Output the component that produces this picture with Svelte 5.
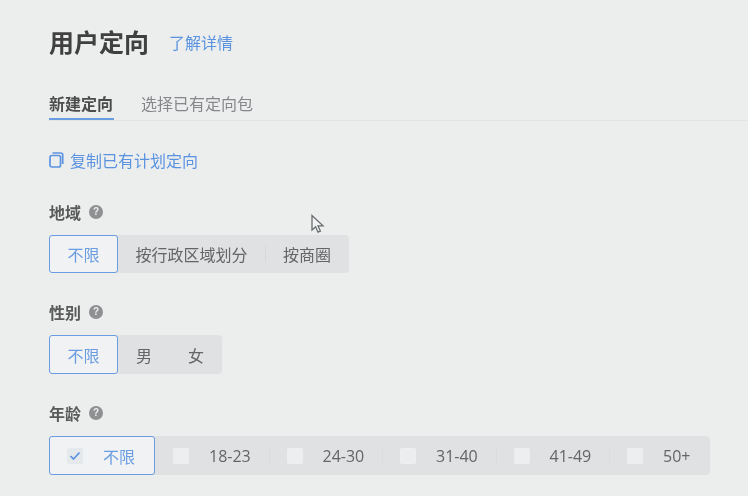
<script>
  const ages = ['18-23', '24-30', '31-40', '41-49', '50+'];
</script>

<main class="page">
  <header class="head">
    <h1>用户定向</h1>
    <a class="more">了解详情</a>
  </header>

  <nav class="tabs">
    <span class="tab active">新建定向</span>
    <span class="tab">选择已有定向包</span>
  </nav>

  <a class="copy">
    <svg width="15" height="16" viewBox="0 0 15 16" fill="none" stroke="#5b93e0" stroke-width="1.7">
      <rect x="1" y="3.5" width="10.5" height="11.5" rx="1.8" />
      <path d="M3.5 1h8.2a2 2 0 0 1 2 2v9" />
    </svg>
    复制已有计划定向
  </a>

  <section class="field first">
    <div class="label">地域 <i class="help">?</i></div>
    <div class="seg">
      <span class="opt on w69">不限</span>
      <span class="opt w147">按行政区域划分</span>
      <span class="opt w84 sep">按商圈</span>
    </div>
  </section>

  <section class="field second">
    <div class="label">性别 <i class="help">?</i></div>
    <div class="seg tall">
      <span class="opt on w69">不限</span>
      <span class="opt w52">男</span>
      <span class="opt w52">女</span>
    </div>
  </section>

  <section class="field third">
    <div class="label">年龄 <i class="help">?</i></div>
    <div class="seg tall">
      <span class="opt on age first-age">
        <b class="box checked">
          <svg width="12" height="10" viewBox="0 0 12 10" fill="none" stroke="#5b93e0" stroke-width="1.7"><path d="M1.5 5l3 3 6-6.5" /></svg>
        </b>
        不限
      </span>
      {#each ages as a, i}
        <span class="opt age" class:sep={i > 0} class:faint={i > 0} class:last={i === 4}><b class="box"></b><span class="num">{a}</span></span>
      {/each}
    </div>
  </section>

  <svg class="cursor" width="16" height="21" viewBox="0 0 16 21" fill="#f1f2f2" stroke="#6a6d70" stroke-width="1.3">
    <path d="M2 1.5v14.5l3.6-3.2 2.4 5.4 2.4-1.1-2.4-5.3h5z" />
  </svg>
</main>

<style>
  :global(body) {
    margin: 0;
    background: #eceeee;
  }
  .page {
    position: relative;
    width: 748px;
    height: 496px;
    box-sizing: border-box;
    padding: 25px 0 0 49px;
    overflow: hidden;
    background: #eceeee;
    color: #555;
    font-family: "Noto Sans CJK SC", "Liberation Sans", sans-serif;
    filter: blur(0.6px);
  }
  .head {
    display: flex;
    align-items: center;
    height: 33px;
  }
  h1 {
    margin: 0;
    font-size: 25px;
    line-height: 33px;
    font-weight: 700;
    color: #404040;
  }
  .more {
    margin-left: 20px;
    font-size: 16px;
    color: #5b93e0;
  }
  .tabs {
    display: flex;
    gap: 27px;
    height: 62px;
    align-items: flex-end;
    box-shadow: 0 1px 0 #e3e5e5;
  }
  .tab {
    height: 30px;
    line-height: 26px;
    font-size: 16px;
    color: #85878a;
    box-sizing: border-box;
  }
  .tab.active {
    width: 65px;
    color: #4c4c4c;
    font-weight: 700;
    border-bottom: 2px solid #6a9ce2;
  }
  .copy {
    display: flex;
    align-items: center;
    gap: 6px;
    margin-top: 30px;
    height: 20px;
    font-size: 16px;
    color: #5b93e0;
  }
  .field {
    display: flex;
    flex-direction: column;
  }
  .first { margin-top: 31px; }
  .second { margin-top: 28px; }
  .third { margin-top: 28px; }
  .label {
    display: flex;
    align-items: center;
    gap: 8px;
    height: 22px;
    font-size: 16px;
    font-weight: 700;
    color: #5a5a5a;
    margin-bottom: 12px;
  }
  .help {
    width: 14px;
    height: 14px;
    border-radius: 50%;
    background: #8e9091;
    color: #eceeee;
    font: 700 10px/14px "Liberation Sans", sans-serif;
    text-align: center;
  }
  .seg {
    display: flex;
    width: fit-content;
    height: 38px;
    border-radius: 4px;
    background: #dfe1e2;
  }
  .seg.tall { height: 39px; }
  .opt {
    display: flex;
    align-items: center;
    justify-content: center;
    box-sizing: border-box;
    font-size: 16px;
    color: #636567;
    position: relative;
  }
  .on {
    background: #f0f2f3;
    border: 1.5px solid #6a9ce2;
    border-radius: 3px;
    color: #6a9ce2;
  }
  .w69 { width: 69px; }
  .w147 { width: 147px; }
  .w84 { width: 84px; }
  .w52 { width: 52px; }
  .sep::before {
    content: "";
    position: absolute;
    left: 0;
    top: 11px;
    bottom: 11px;
    width: 1px;
    background: #d6d8d9;
  }
  .sep.faint::before {
    background: #dbdddd;
  }
  .age {
    width: 113.5px;
    justify-content: flex-start;
    padding-left: 18px;
    font-family: "Open Sans", "Noto Sans CJK SC", sans-serif;
  }
  .age.last { width: 101px; }
  .age .num { margin-left: 20px; }
  .first-age {
    width: 106px;
    padding-left: 17px;
    font-family: "Noto Sans CJK SC", sans-serif;
    gap: 20px;
  }
  .box {
    display: flex;
    align-items: center;
    justify-content: center;
    width: 16px;
    height: 16px;
    border-radius: 2px;
    background: #eceeef;
  }
  .box.checked {
    background: #e6e9ec;
  }
  .cursor {
    position: absolute;
    left: 310px;
    top: 214px;
  }
</style>
